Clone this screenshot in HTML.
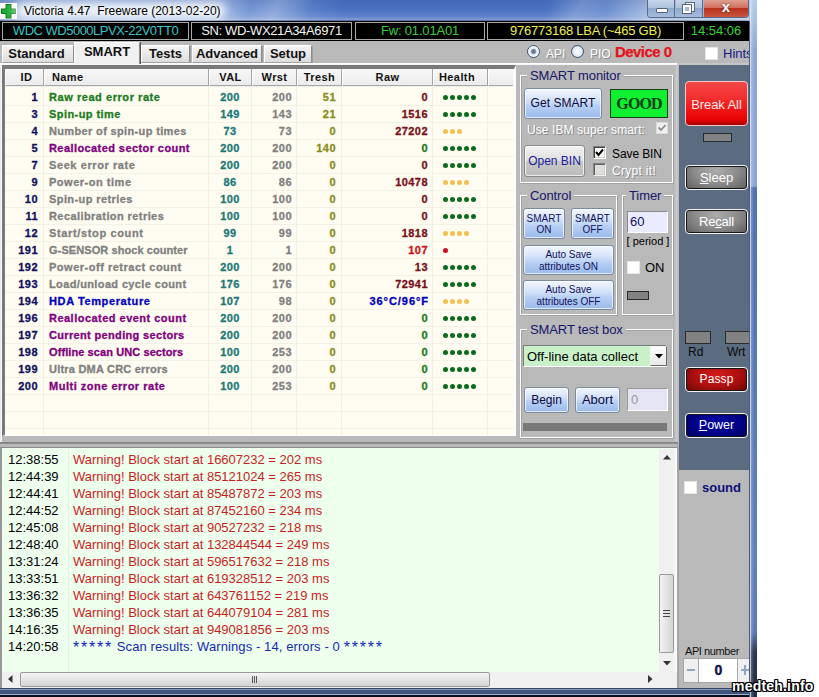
<!DOCTYPE html>
<html><head><meta charset="utf-8"><title>Victoria 4.47</title>
<style>
*{box-sizing:border-box;margin:0;padding:0}
html,body{width:819px;height:697px;overflow:hidden;background:#fff}
body{font-family:"Liberation Sans",sans-serif;font-size:13px;color:#000;position:relative}
.a{position:absolute}
#win{position:absolute;left:0;top:0;width:757px;height:697px;overflow:hidden;background:#b9b9b9}
/* title */
#title{left:0;top:0;width:757px;height:21px;background:linear-gradient(rgba(10,20,80,.10) 0,rgba(255,255,255,0) 45%,rgba(255,255,255,.12) 80%,rgba(255,255,255,.3) 94%,rgba(30,40,70,.45) 100%),linear-gradient(115deg,rgba(255,255,255,0) 33%,rgba(255,255,255,.22) 36.5%,rgba(255,255,255,0) 41%,rgba(255,255,255,0) 72%,rgba(255,255,255,.16) 76%,rgba(255,255,255,0) 80%),linear-gradient(90deg,#7f9cd4 0,#9db6e0 4%,#a0b8e2 29%,#7394d4 33%,#5f84cc 40%,#4a72c2 45%,#4a72c2 72%,#6a8cd0 80%,#a0b8e0 85.5%,#b0c6e6 100%)}
#glow{left:14px;top:3px;width:212px;height:15px;background:rgba(255,255,255,.82);border-radius:8px;filter:blur(5px)}
#title .tt{left:24px;top:4px;text-shadow:0 0 4px #fff,0 0 8px #fff;font-size:12px;line-height:15px;white-space:pre;color:#000}
#frameR{left:749px;top:0;width:8px;height:697px;background:linear-gradient(#b4cbe8 0,#a8c0e2 21px,#8ea8d6 50px,#8ea8d6 186px,#5070b2 188px,#5f80bc 560px,#5a7ab8 632px,#2c3852 652px,#222c44 697px)}
#frameR:before{content:'';position:absolute;left:0;top:21px;width:1px;height:676px;background:#4c5c78}
#frameR:after{content:'';position:absolute;left:1px;top:0;width:7px;height:697px;background:linear-gradient(90deg,rgba(225,235,250,.8) 0,rgba(225,235,250,.8) 1px,rgba(255,255,255,.25) 1px,rgba(255,255,255,0) 4px);border-right:1px solid #1c2434}
#frameB{left:0;top:688px;width:756px;height:9px;background:linear-gradient(#f4f4f4 0,#f4f4f4 .5px,#3a4660 .5px,#3a4660 1.5px,#8098c0 1.5px,#8098c0 2.5px,#44587f 2.5px,#3c4f78 6.5px,#9db4dc 6.5px,#9db4dc 7.5px,#0a0e18 7.5px)}
/* black bar */
#bar{left:0;top:21px;width:750px;height:20px;background:#000}
.bx{position:absolute;top:1px;height:18px;border:1px solid #a8a8a8;text-align:center;font-size:13px;line-height:16px;white-space:nowrap;letter-spacing:-.5px}
/* tabs */
.tab{position:absolute;top:45px;height:17px;box-shadow:1px 1px 0 #a0a0a0;background:linear-gradient(#f4f4f4,#dcdcdc);border:1px solid #8a8a8a;border-bottom:none;border-left-color:#fff;border-top-color:#fff;font-weight:bold;font-size:13px;line-height:15px;text-align:center;color:#111}
.tab.sel{top:42px;height:22px;background:#f0f0f0;line-height:18px;z-index:2;box-shadow:1px 0 0 #555}
/* table */
#tbl{left:2px;top:65px;width:514px;height:371px;border:3px solid #7a7a7a;border-top-width:4px;border-right:2px solid #fff;border-bottom:1px solid #fff;background:#fffdf1}
#thead{left:5px;top:69px;width:507px;height:18px;background:#ececec}
.th{position:absolute;top:69px;height:17px;background:linear-gradient(#f8f8f8,#ebebeb);border-right:1px solid #a4a4a4;border-bottom:1px solid #a8a8a8;border-left:1px solid #fff;font-weight:bold;font-size:11px;line-height:17px;color:#111;text-align:center;letter-spacing:.4px}
.tr{position:absolute;left:0;width:514px;height:17px}
.c{position:absolute;top:0;height:17px;line-height:17px;font-weight:bold;font-size:11px;white-space:nowrap;letter-spacing:.45px;-webkit-text-stroke:.3px currentColor}
.id{left:6px;width:32px;text-align:right;color:#101060}
.nm{left:49px}
.val{left:209px;width:42px;text-align:center;color:#1c7878}
.wr{left:251px;width:41px;text-align:right;color:#808080}
.th_{}
.c.th{left:297px;width:39px;text-align:right;color:#8c8c1c;background:none;border:none}
.raw{left:342px;width:86px;text-align:right}
.tr i{position:absolute;top:6px;width:5px;height:5px;border-radius:50%}
.hl{position:absolute;left:5px;width:509px;height:1px;background:#f4f2e6}
.vl{position:absolute;top:87px;width:1px;height:348px;background:#f2f0e3}
/* groups */
.grp{position:absolute;border:1px solid #fff;box-shadow:inset 1px 1px 0 #a2a2a2, 1px 1px 0 #a2a2a2;border-radius:0}
.grp>b{position:absolute;top:-8px;left:6px;letter-spacing:-.1px;background:#b9b9b9;padding:0 3px;font-weight:normal;font-size:13px;line-height:16px;color:#16166a;white-space:nowrap}
.btn{position:absolute;border:1px solid #7a8aa0;border-radius:3px;background:linear-gradient(#f2f7fe 0,#d6e4f9 35%,#b4cdf3 62%,#9abaec 100%);box-shadow:inset 0 0 0 1px rgba(255,255,255,.7);text-align:center;color:#0c0c3c;font-size:13px;white-space:nowrap}
.btn.s{font-size:10px;line-height:11px;color:#10105a}
.dbtn{position:absolute;border:1px solid #f2f2f2;border-radius:4px;background:radial-gradient(ellipse at 50% 20%,#acacac 0,#8c8c8c 50%,#5c5c5c 100%);box-shadow:inset 0 0 0 1px #151515;color:#fff;text-align:center;font-size:13px}
.cb{position:absolute;width:13px;height:13px;background:#fff;border:1px solid #e6e6e6}
.cbc{position:absolute;width:13px;height:13px;background:#fff;border:1px solid;border-color:#808080 #fff #fff #808080;box-shadow:inset 1px 1px 0 #404040,inset -1px -1px 0 #d4d0c8}
.dis{color:#fff;text-shadow:1px 1px 0 #8a8a8a}
.led{position:absolute;background:#828282;border:1px solid #2a2a2a}
/* log */
#log{left:0;top:447px;width:677px;height:242px;background:#eeffee;border-left:2px solid #999;border-top:1px solid #8a8a8a}
.lr{position:absolute;left:0;height:17px;line-height:17px;font-size:13px;white-space:nowrap}
.lt{position:absolute;left:8px;color:#000}
.lm{position:absolute;left:73px}
.lm.w{color:#c81e1e}
.lm.s{color:#1428b4;letter-spacing:.1px}
.lm em{font-style:normal;font-size:16px;line-height:10px;letter-spacing:1.8px;position:relative;top:2px}
</style></head><body>
<div id="win">
<div id="title" class="a">
  <svg class="a" style="left:0;top:3px" width="17" height="16"><rect width="17" height="16" fill="#fff"/><path d="M5.5 1h6v4.5h4.5v5.5h-4.5v4.500h-6v-4.500h-4.500v-5.500h4.500z" fill="#0c7c18"/><path d="M6.500 2h4v4.500h4.500v3.500h-4.500v4.500h-4v-4.500h-4.500v-3.500h4.500z" fill="#1cac30"/></svg>
  <div id="glow" class="a"></div>
  <div class="a tt">Victoria 4.47  Freeware (2013-02-20)</div>
  <!-- window buttons -->
  <div class="a" style="left:647px;top:0;width:102px;height:18px;border:1px solid #5a6a88;border-top:none;border-radius:0 0 4px 4px;overflow:hidden;background:#9fb6d6">
    <div class="a" style="left:0;top:0;width:27px;height:17px;background:linear-gradient(#c6d5ea 0,#aabfdc 50%,#8ea8cd 50%,#a5bcdc 100%);border-right:1px solid #5a6a88"></div>
    <div class="a" style="left:28px;top:0;width:27px;height:17px;background:linear-gradient(#c6d5ea 0,#aabfdc 50%,#8ea8cd 50%,#a5bcdc 100%);border-right:1px solid #5a6a88"></div>
    <div class="a" style="left:56px;top:0;width:44px;height:17px;background:linear-gradient(#e0a093 0,#cf6a58 50%,#b8321c 50%,#c9563f 100%)"></div>
    <div class="a" style="left:8px;top:8px;width:12px;height:5px;background:#fff;border:1px solid #55627a;border-radius:1px"></div>
    <div class="a" style="left:38px;top:3px;width:8px;height:8px;border:2px solid #fff;outline:1px solid #55627a"></div>
    <div class="a" style="left:35px;top:5px;width:8px;height:8px;border:2px solid #fff;outline:1px solid #55627a;background:#9fb6d6"></div>
    <div class="a" style="left:70px;top:-2px;width:16px;height:17px;font:bold 15px/17px 'Liberation Sans',sans-serif;color:#fff;text-align:center;text-shadow:0 0 2px #402020">x</div>
  </div>
</div>
<div id="bar" class="a">
  <div class="bx" style="left:2px;width:187px;color:#38c4c4">WDC WD5000LPVX-22V0TT0</div>
  <div class="bx" style="left:191px;width:161px;color:#f4f4f4;letter-spacing:-.36px">SN: WD-WX21A34A6971</div>
  <div class="bx" style="left:355px;width:130px;color:#38d038;letter-spacing:-.18px">Fw: 01.01A01</div>
  <div class="bx" style="left:487px;width:197px;color:#f0f050;letter-spacing:-.24px">976773168 LBA (~465 GB)</div>
  <div class="a" style="left:686px;top:2px;width:60px;text-align:center;font-size:13px;line-height:16px;color:#38d038">14:54:06</div>
</div>
<!-- tabs -->
<div class="tab" style="left:2px;width:72px;padding-right:3px">Standard</div>
<div class="tab sel" style="left:74px;width:66px">SMART</div>
<div class="tab" style="left:141px;width:49px">Tests</div>
<div class="tab" style="left:192px;width:70px">Advanced</div>
<div class="tab" style="left:264px;width:48px">Setup</div>
<div class="a" style="left:0;top:63px;width:677px;height:1px;background:#fff"></div><div class="a" style="left:0;top:64px;width:677px;height:1px;background:#f6f6f6"></div><div class="a" style="left:677px;top:63px;width:72px;height:2px;background:#c6c6c6"></div>
<!-- radios -->
<div class="a" style="left:527px;top:45px;width:13px;height:13px;border-radius:50%;border:1px solid #3c5674;background:radial-gradient(#5c6c84 0,#7888a0 2px,#e4ecf4 3.2px,#fff 6px)"></div>
<div class="a dis" style="left:546px;top:47px;font-size:12px;line-height:15px">API</div>
<div class="a" style="left:571px;top:45px;width:13px;height:13px;border-radius:50%;border:1px solid #3c5674;background:radial-gradient(#fff 0,#e8eef4 4px,#c8d4e0 6px)"></div>
<div class="a dis" style="left:590px;top:47px;font-size:12px;line-height:15px">PIO</div>
<div class="a" style="left:615px;top:43px;font-weight:bold;font-size:15px;line-height:18px;color:#e4141c;letter-spacing:-.55px;-webkit-text-stroke:.25px #e4141c">Device 0</div>
<div class="cb" style="left:705px;top:47px"></div>
<div class="a" style="left:723px;top:46px;font-size:13px;line-height:16px;color:#16168a;white-space:nowrap">Hints</div>

<!-- main panel raised border -->
<div class="a" style="left:0;top:65px;width:2px;height:377px;background:linear-gradient(90deg,#e8e8e8,#f8f8f8)"></div>
<div id="tbl" class="a"></div>
<div id="thead" class="a"></div>
<div class="th" style="left:5px;width:39px;text-align:center;padding-left:4px">ID</div>
<div class="th" style="left:44px;width:165px;text-align:left;padding-left:7px">Name</div>
<div class="th" style="left:209px;width:43px">VAL</div>
<div class="th" style="left:252px;width:45px">Wrst</div>
<div class="th" style="left:297px;width:45px">Tresh</div>
<div class="th" style="left:342px;width:91px">Raw</div>
<div class="th" style="left:433px;width:55px;text-align:left;padding-left:5px">Health</div>
<div class="th" style="left:488px;width:25px;border-right:none"></div>
<div class="hl" style="top:105px"></div><div class="hl" style="top:122px"></div><div class="hl" style="top:139px"></div><div class="hl" style="top:156px"></div><div class="hl" style="top:173px"></div><div class="hl" style="top:190px"></div><div class="hl" style="top:207px"></div><div class="hl" style="top:224px"></div><div class="hl" style="top:241px"></div><div class="hl" style="top:258px"></div><div class="hl" style="top:275px"></div><div class="hl" style="top:292px"></div><div class="hl" style="top:309px"></div><div class="hl" style="top:326px"></div><div class="hl" style="top:343px"></div><div class="hl" style="top:360px"></div><div class="hl" style="top:377px"></div><div class="hl" style="top:394px"></div><div class="hl" style="top:411px"></div><div class="hl" style="top:428px"></div>
<div class="vl" style="left:43px"></div><div class="vl" style="left:208px"></div><div class="vl" style="left:251px"></div><div class="vl" style="left:296px"></div><div class="vl" style="left:341px"></div><div class="vl" style="left:432px"></div><div class="vl" style="left:487px"></div>
<div class="tr" style="top:89px"><span class="c id">1</span><span class="c nm" style="color:#1c7a1c;letter-spacing:0.56px">Raw read error rate</span><span class="c val">200</span><span class="c wr">200</span><span class="c th">51</span><span class="c raw" style="color:#7a0f1a">0</span><i style="left:443px;background:#0c6a1c"></i><i style="left:450px;background:#0c6a1c"></i><i style="left:457px;background:#0c6a1c"></i><i style="left:464px;background:#0c6a1c"></i><i style="left:471px;background:#0c6a1c"></i></div>
<div class="tr" style="top:106px"><span class="c id">3</span><span class="c nm" style="color:#1c7a1c;letter-spacing:0.43px">Spin-up time</span><span class="c val">149</span><span class="c wr">143</span><span class="c th">21</span><span class="c raw" style="color:#7a0f1a">1516</span><i style="left:443px;background:#0c6a1c"></i><i style="left:450px;background:#0c6a1c"></i><i style="left:457px;background:#0c6a1c"></i><i style="left:464px;background:#0c6a1c"></i><i style="left:471px;background:#0c6a1c"></i></div>
<div class="tr" style="top:123px"><span class="c id">4</span><span class="c nm" style="color:#808080;letter-spacing:0.35px">Number of spin-up times</span><span class="c val">73</span><span class="c wr">73</span><span class="c th">0</span><span class="c raw" style="color:#7a0f1a">27202</span><i style="left:443px;background:#f0c050"></i><i style="left:450px;background:#f0c050"></i><i style="left:457px;background:#f0c050"></i></div>
<div class="tr" style="top:140px"><span class="c id">5</span><span class="c nm" style="color:#800080;letter-spacing:0.42px">Reallocated sector count</span><span class="c val">200</span><span class="c wr">200</span><span class="c th">140</span><span class="c raw" style="color:#1c7a1c">0</span><i style="left:443px;background:#0c6a1c"></i><i style="left:450px;background:#0c6a1c"></i><i style="left:457px;background:#0c6a1c"></i><i style="left:464px;background:#0c6a1c"></i><i style="left:471px;background:#0c6a1c"></i></div>
<div class="tr" style="top:157px"><span class="c id">7</span><span class="c nm" style="color:#808080;letter-spacing:0.59px">Seek error rate</span><span class="c val">200</span><span class="c wr">200</span><span class="c th">0</span><span class="c raw" style="color:#7a0f1a">0</span><i style="left:443px;background:#0c6a1c"></i><i style="left:450px;background:#0c6a1c"></i><i style="left:457px;background:#0c6a1c"></i><i style="left:464px;background:#0c6a1c"></i><i style="left:471px;background:#0c6a1c"></i></div>
<div class="tr" style="top:174px"><span class="c id">9</span><span class="c nm" style="color:#808080;letter-spacing:0.52px">Power-on time</span><span class="c val">86</span><span class="c wr">86</span><span class="c th">0</span><span class="c raw" style="color:#7a0f1a">10478</span><i style="left:443px;background:#f0c050"></i><i style="left:450px;background:#f0c050"></i><i style="left:457px;background:#f0c050"></i><i style="left:464px;background:#f0c050"></i></div>
<div class="tr" style="top:191px"><span class="c id">10</span><span class="c nm" style="color:#808080;letter-spacing:0.41px">Spin-up retries</span><span class="c val">100</span><span class="c wr">100</span><span class="c th">0</span><span class="c raw" style="color:#7a0f1a">0</span><i style="left:443px;background:#0c6a1c"></i><i style="left:450px;background:#0c6a1c"></i><i style="left:457px;background:#0c6a1c"></i><i style="left:464px;background:#0c6a1c"></i><i style="left:471px;background:#0c6a1c"></i></div>
<div class="tr" style="top:208px"><span class="c id">11</span><span class="c nm" style="color:#808080;letter-spacing:0.42px">Recalibration retries</span><span class="c val">100</span><span class="c wr">100</span><span class="c th">0</span><span class="c raw" style="color:#7a0f1a">0</span><i style="left:443px;background:#0c6a1c"></i><i style="left:450px;background:#0c6a1c"></i><i style="left:457px;background:#0c6a1c"></i><i style="left:464px;background:#0c6a1c"></i><i style="left:471px;background:#0c6a1c"></i></div>
<div class="tr" style="top:225px"><span class="c id">12</span><span class="c nm" style="color:#808080;letter-spacing:0.64px">Start/stop count</span><span class="c val">99</span><span class="c wr">99</span><span class="c th">0</span><span class="c raw" style="color:#7a0f1a">1818</span><i style="left:443px;background:#f0c050"></i><i style="left:450px;background:#f0c050"></i><i style="left:457px;background:#f0c050"></i><i style="left:464px;background:#f0c050"></i></div>
<div class="tr" style="top:242px"><span class="c id">191</span><span class="c nm" style="color:#808080;letter-spacing:0.08px">G-SENSOR shock counter</span><span class="c val">1</span><span class="c wr">1</span><span class="c th">0</span><span class="c raw" style="color:#d01020">107</span><i style="left:443px;background:#d01020"></i></div>
<div class="tr" style="top:259px"><span class="c id">192</span><span class="c nm" style="color:#808080;letter-spacing:0.51px">Power-off retract count</span><span class="c val">200</span><span class="c wr">200</span><span class="c th">0</span><span class="c raw" style="color:#7a0f1a">13</span><i style="left:443px;background:#0c6a1c"></i><i style="left:450px;background:#0c6a1c"></i><i style="left:457px;background:#0c6a1c"></i><i style="left:464px;background:#0c6a1c"></i><i style="left:471px;background:#0c6a1c"></i></div>
<div class="tr" style="top:276px"><span class="c id">193</span><span class="c nm" style="color:#808080;letter-spacing:0.37px">Load/unload cycle count</span><span class="c val">176</span><span class="c wr">176</span><span class="c th">0</span><span class="c raw" style="color:#7a0f1a">72941</span><i style="left:443px;background:#0c6a1c"></i><i style="left:450px;background:#0c6a1c"></i><i style="left:457px;background:#0c6a1c"></i><i style="left:464px;background:#0c6a1c"></i><i style="left:471px;background:#0c6a1c"></i></div>
<div class="tr" style="top:293px"><span class="c id">194</span><span class="c nm" style="color:#0000c0;letter-spacing:0.62px">HDA Temperature</span><span class="c val">107</span><span class="c wr">98</span><span class="c th">0</span><span class="c raw" style="color:#0000c0;letter-spacing:.95px;margin-left:1px">36°C/96°F</span><i style="left:443px;background:#f0c050"></i><i style="left:450px;background:#f0c050"></i><i style="left:457px;background:#f0c050"></i><i style="left:464px;background:#f0c050"></i></div>
<div class="tr" style="top:310px"><span class="c id">196</span><span class="c nm" style="color:#800080;letter-spacing:0.48px">Reallocated event count</span><span class="c val">200</span><span class="c wr">200</span><span class="c th">0</span><span class="c raw" style="color:#1c7a1c">0</span><i style="left:443px;background:#0c6a1c"></i><i style="left:450px;background:#0c6a1c"></i><i style="left:457px;background:#0c6a1c"></i><i style="left:464px;background:#0c6a1c"></i><i style="left:471px;background:#0c6a1c"></i></div>
<div class="tr" style="top:327px"><span class="c id">197</span><span class="c nm" style="color:#800080;letter-spacing:0.34px">Current pending sectors</span><span class="c val">200</span><span class="c wr">200</span><span class="c th">0</span><span class="c raw" style="color:#1c7a1c">0</span><i style="left:443px;background:#0c6a1c"></i><i style="left:450px;background:#0c6a1c"></i><i style="left:457px;background:#0c6a1c"></i><i style="left:464px;background:#0c6a1c"></i><i style="left:471px;background:#0c6a1c"></i></div>
<div class="tr" style="top:344px"><span class="c id">198</span><span class="c nm" style="color:#800080;letter-spacing:0.09px">Offline scan UNC sectors</span><span class="c val">100</span><span class="c wr">253</span><span class="c th">0</span><span class="c raw" style="color:#1c7a1c">0</span><i style="left:443px;background:#0c6a1c"></i><i style="left:450px;background:#0c6a1c"></i><i style="left:457px;background:#0c6a1c"></i><i style="left:464px;background:#0c6a1c"></i><i style="left:471px;background:#0c6a1c"></i></div>
<div class="tr" style="top:361px"><span class="c id">199</span><span class="c nm" style="color:#808080;letter-spacing:0.22px">Ultra DMA CRC errors</span><span class="c val">200</span><span class="c wr">200</span><span class="c th">0</span><span class="c raw" style="color:#1c7a1c">0</span><i style="left:443px;background:#0c6a1c"></i><i style="left:450px;background:#0c6a1c"></i><i style="left:457px;background:#0c6a1c"></i><i style="left:464px;background:#0c6a1c"></i><i style="left:471px;background:#0c6a1c"></i></div>
<div class="tr" style="top:378px"><span class="c id">200</span><span class="c nm" style="color:#800080;letter-spacing:0.51px">Multi zone error rate</span><span class="c val">100</span><span class="c wr">253</span><span class="c th">0</span><span class="c raw" style="color:#1c7a1c">0</span><i style="left:443px;background:#0c6a1c"></i><i style="left:450px;background:#0c6a1c"></i><i style="left:457px;background:#0c6a1c"></i><i style="left:464px;background:#0c6a1c"></i><i style="left:471px;background:#0c6a1c"></i></div>

<!-- right panel -->
<div class="a" style="left:675px;top:65px;width:3px;height:377px;background:linear-gradient(90deg,#bebebe,#cacaca,#c0c0c0)"></div>
<div class="grp" style="left:520px;top:75px;width:153px;height:108px"><b>SMART monitor</b></div>
<div class="btn" style="left:524px;top:88px;width:78px;height:31px;line-height:29px;font-size:12px;letter-spacing:.05px">Get SMART</div>
<div class="a" style="left:610px;top:89px;width:58px;height:29px;background:#10f030;border:1px solid #1a401a;text-align:center;font:bold 16px/28px 'Liberation Serif',serif;letter-spacing:-.9px;color:#003c10">GOOD</div>
<div class="a dis" style="left:527px;top:123px;font-size:12px;line-height:15px;white-space:nowrap;letter-spacing:.1px">Use IBM super smart:</div>
<div class="cb" style="left:656px;top:122px;width:12px;height:12px;background:#f0f0f0;border-color:#dcdcdc"></div>
<svg class="a" style="left:656px;top:122px" width="12" height="12"><path d="M2.500 5.500l2.500 2.500l4.500-5" stroke="#8c8c8c" stroke-width="1.800" fill="none"/></svg>
<div class="btn" style="left:524px;top:145px;width:61px;height:32px;line-height:29px;background:linear-gradient(#f2f2f2 0,#dedede 48%,#c8c8c8 52%,#bcbcbc 100%);border-color:#8a8a8a;color:#1c1c9c;font-size:12px;line-height:30px">Open BIN</div>
<div class="cbc" style="left:593px;top:146px"></div>
<svg class="a" style="left:593px;top:146px" width="13" height="13"><path d="M3 6l2.500 3l4.500-5.500" stroke="#000" stroke-width="2" fill="none"/></svg>
<div class="a" style="left:612px;top:147px;font-size:12px;line-height:15px;white-space:nowrap;letter-spacing:-.1px">Save BIN</div>
<div class="cbc" style="left:593px;top:163px;background:#dedede;border-color:#808080 #f4f4f4 #f4f4f4 #808080;box-shadow:inset 1px 1px 0 #606060,inset -1px -1px 0 #d4d0c8"></div>
<div class="a dis" style="left:612px;top:164px;letter-spacing:.3px;font-size:12px;line-height:15px;white-space:nowrap">Crypt it!</div>

<div class="grp" style="left:520px;top:195px;width:97px;height:120px"><b>Control</b></div>
<div class="grp" style="left:622px;top:195px;width:51px;height:120px"><b style="left:3px">Timer</b></div>
<div class="btn s" style="left:523px;top:208px;width:42px;height:31px;padding-top:4px">SMART<br>ON</div>
<div class="btn s" style="left:571px;top:208px;width:43px;height:31px;padding-top:4px">SMART<br>OFF</div>
<div class="btn s" style="left:523px;top:245px;width:91px;height:30px;padding-top:3px;line-height:12px">Auto Save<br>attributes ON</div>
<div class="btn s" style="left:523px;top:280px;width:91px;height:30px;padding-top:3px;line-height:12px">Auto Save<br>attributes OFF</div>
<div class="a" style="left:627px;top:211px;width:41px;height:22px;background:#ebebff;border:1px solid #fff;border-top-color:#8a8a8a;border-left-color:#8a8a8a;font-size:13px;line-height:19px;padding-left:2px;color:#10106a">60</div>
<div class="a" style="left:626px;top:234px;width:44px;text-align:center;font-size:11px;line-height:14px;white-space:nowrap">[ period ]</div>
<div class="cb" style="left:627px;top:261px"></div>
<div class="a" style="left:645px;top:260px;font-size:13px;line-height:15px">ON</div>
<div class="led" style="left:627px;top:291px;width:22px;height:9px"></div>

<div class="grp" style="left:520px;top:329px;width:153px;height:109px"><b>SMART test box</b></div>
<div class="a" style="left:523px;top:345px;width:144px;height:22px;background:#c9f0c9;border:1px solid #fff;border-top-color:#7a7a7a;border-left-color:#7a7a7a;font-size:13px;line-height:21px;padding-left:3px;white-space:nowrap">Off-line data collect</div>
<div class="a" style="left:650px;top:346px;width:17px;height:20px;background:linear-gradient(#fdfdfd,#e8e8e8);border:1px solid #f4f4f4;border-right-color:#6a6a6a;border-bottom-color:#6a6a6a"></div>
<svg class="a" style="left:655px;top:354px" width="8" height="5"><path d="M0 0h8l-4 4.500z" fill="#000"/></svg>
<div class="btn" style="left:524px;top:387px;width:45px;height:26px;line-height:24px;font-size:12px">Begin</div>
<div class="btn" style="left:575px;top:387px;width:45px;height:26px;line-height:24px">Abort</div>
<div class="a" style="left:627px;top:388px;width:41px;height:23px;background:#e4e4f4;border:1px solid #fff;border-top-color:#9a9a9a;border-left-color:#9a9a9a;font-size:13px;line-height:21px;padding-left:3px;color:#9a9a9a">0</div>
<div class="a" style="left:523px;top:423px;width:144px;height:8px;background:#787878"></div>

<!-- dark right panel -->
<div class="a" style="left:679px;top:65px;width:71px;height:405px;background:#5b6b80"></div>
<div class="a" style="left:685px;top:81px;width:63px;height:45px;border:1px solid #f4c8c8;border-radius:4px;background:linear-gradient(#f04848 0,#f43030 35%,#f01414 65%,#e60202 88%,#a80000 100%);color:#ffeaea;text-align:center;font-size:13px;line-height:45px;white-space:nowrap;letter-spacing:-.1px">Break All</div>
<div class="led" style="left:703px;top:133px;width:29px;height:9px"></div>
<div class="dbtn" style="left:685px;top:165px;width:63px;height:25px;line-height:23px"><u>S</u>leep</div>
<div class="dbtn" style="left:685px;top:209px;width:63px;height:25px;line-height:23px;letter-spacing:-.2px">Re<u>c</u>all</div>
<div class="led" style="left:685px;top:331px;width:26px;height:13px"></div>
<div class="led" style="left:725px;top:331px;width:26px;height:13px"></div>
<div class="a" style="left:688px;top:345px;font-size:12px;line-height:15px;color:#0a0a0a">Rd</div>
<div class="a" style="left:727px;top:345px;font-size:12px;line-height:15px;color:#0a0a0a;white-space:nowrap">Wrt</div>
<div class="dbtn" style="left:685px;top:367px;width:63px;height:25px;line-height:23px;font-size:12px;letter-spacing:.1px;background:radial-gradient(ellipse at 50% 30%,#d41c1c 0,#b01010 50%,#6c0404 100%)">Passp</div>
<div class="dbtn" style="left:685px;top:413px;width:63px;height:25px;line-height:23px;font-size:12.5px;background:radial-gradient(ellipse at 50% 40%,#0404a8 0,#020288 55%,#00005c 100%)"><u>P</u>ower</div>

<!-- gray lower right panel -->
<div class="a" style="left:677px;top:444px;width:2px;height:245px;background:#a6a6a6"></div><div class="a" style="left:679px;top:470px;width:71px;height:219px;background:#b9b9b9"></div>
<div class="cb" style="left:684px;top:481px"></div>
<div class="a" style="left:702px;top:480px;font-weight:bold;font-size:13px;line-height:16px;color:#10107a">sound</div>
<div class="a" style="left:685px;top:644px;font-size:11px;line-height:14px;white-space:nowrap;color:#111;letter-spacing:-.42px">API number</div>
<div class="a" style="left:683px;top:658px;width:70px;height:25px;background:#fff;border:1px solid #a6a6a6"></div>
<div class="a" style="left:684px;top:659px;width:15px;height:23px;background:#f0f0f0;border-right:1px solid #a6a6a6"></div><div class="a" style="left:687px;top:669px;width:8px;height:2px;background:#8ea6c2"></div>
<div class="a" style="left:699px;top:659px;width:39px;height:23px;text-align:center;font-weight:bold;font-size:14px;line-height:23px;color:#10104a;-webkit-text-stroke:.4px #10104a">0</div>
<div class="a" style="left:737px;top:659px;width:13px;height:23px;background:#f0f0f0;border-left:1px solid #a6a6a6"></div><div class="a" style="left:741px;top:669px;width:9px;height:2px;background:#8ea6c2"></div><div class="a" style="left:744px;top:665px;width:2px;height:10px;background:#8ea6c2"></div>

<!-- splitter -->
<div class="a" style="left:0;top:442px;width:678px;height:2px;background:linear-gradient(#7e7e7e,#949494)"></div>
<!-- log -->
<div id="log" class="a"></div>
<div class="a" style="left:68px;top:449px;width:1px;height:223px;background:#e0f4e0"></div>
<div class="lr" style="top:451px"><span class="lt">12:38:55</span><span class="lm w">Warning! Block start at 16607232 = 202 ms</span></div>
<div class="lr" style="top:468px"><span class="lt">12:44:39</span><span class="lm w">Warning! Block start at 85121024 = 265 ms</span></div>
<div class="lr" style="top:485px"><span class="lt">12:44:41</span><span class="lm w">Warning! Block start at 85487872 = 203 ms</span></div>
<div class="lr" style="top:502px"><span class="lt">12:44:52</span><span class="lm w">Warning! Block start at 87452160 = 234 ms</span></div>
<div class="lr" style="top:519px"><span class="lt">12:45:08</span><span class="lm w">Warning! Block start at 90527232 = 218 ms</span></div>
<div class="lr" style="top:536px"><span class="lt">12:48:40</span><span class="lm w">Warning! Block start at 132844544 = 249 ms</span></div>
<div class="lr" style="top:553px"><span class="lt">13:31:24</span><span class="lm w">Warning! Block start at 596517632 = 218 ms</span></div>
<div class="lr" style="top:570px"><span class="lt">13:33:51</span><span class="lm w">Warning! Block start at 619328512 = 203 ms</span></div>
<div class="lr" style="top:587px"><span class="lt">13:36:32</span><span class="lm w">Warning! Block start at 643761152 = 219 ms</span></div>
<div class="lr" style="top:604px"><span class="lt">13:36:35</span><span class="lm w">Warning! Block start at 644079104 = 281 ms</span></div>
<div class="lr" style="top:621px"><span class="lt">14:16:35</span><span class="lm w">Warning! Block start at 949081856 = 203 ms</span></div>
<div class="lr" style="top:638px"><span class="lt">14:20:58</span><span class="lm s"><em>*****</em> Scan results: Warnings - 14, errors - 0 <em>*****</em></span></div>
<!-- scrollbars -->
<div class="a" style="left:659px;top:449px;width:18px;height:223px;background:linear-gradient(90deg,#f0f0f0 0,#f0f0f0 15.5px,#fbfbfb 15.5px)"></div>
<div class="a" style="left:2px;top:672px;width:675px;height:17px;background:#f0f0f0"></div>
<div class="a" style="left:659px;top:574px;width:15px;height:79px;border:1px solid #9a9a9a;border-radius:2px;background:linear-gradient(90deg,#f4f4f4,#d4d4d4)"></div>
<div class="a" style="left:663px;top:610px;width:7px;height:1px;background:#444;box-shadow:0 3px 0 #444,0 6px 0 #444"></div>
<div class="a" style="left:20px;top:672px;width:470px;height:15px;border:1px solid #9a9a9a;border-radius:2px;background:linear-gradient(#f4f4f4,#d4d4d4)"></div>
<div class="a" style="left:252px;top:676px;width:1px;height:7px;background:#555;box-shadow:2px 0 0 #555,4px 0 0 #555"></div>
<svg class="a" style="left:663px;top:455px" width="8" height="5"><path d="M0 4.500h8l-4-4.500z" fill="#333"/></svg>
<svg class="a" style="left:663px;top:661px" width="8" height="5"><path d="M0 0h8l-4 4.500z" fill="#333"/></svg>
<svg class="a" style="left:8px;top:675px" width="5" height="8"><path d="M4.500 0v8l-4.500-4z" fill="#333"/></svg>
<svg class="a" style="left:648px;top:675px" width="5" height="8"><path d="M0 0v8l4.500-4z" fill="#333"/></svg>

<div id="frameB" class="a"></div>
<div id="frameR" class="a"></div>
</div>
<!-- watermark -->
<div class="a" style="left:732px;top:677px;font-weight:bold;font-size:14px;line-height:18px;color:#fff;letter-spacing:.2px;white-space:nowrap;text-shadow:1px 0 0 #000,-1px 0 0 #000,0 1px 0 #000,0 -1px 0 #000,1px 1px 0 #000,-1px -1px 0 #000,1px -1px 0 #000,-1px 1px 0 #000">medteh.info</div>
</body></html>
